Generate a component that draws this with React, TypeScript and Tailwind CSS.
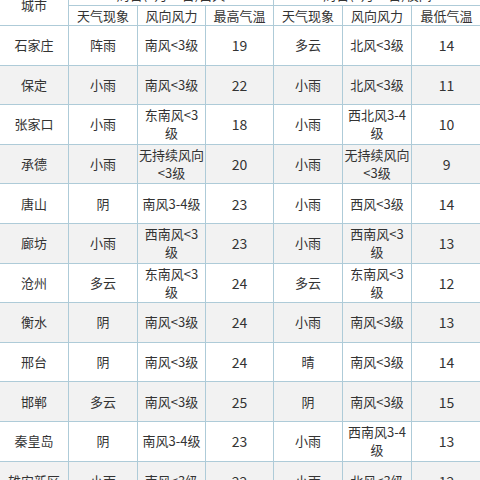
const rows: string[][] = [
  ["石家庄", "阵雨", "南风<3级", "19", "多云", "北风<3级", "14"],
  ["保定", "小雨", "南风<3级", "22", "小雨", "北风<3级", "11"],
  ["张家口", "小雨", "东南风<3\n级", "18", "小雨", "西北风3-4\n级", "10"],
  ["承德", "小雨", "无持续风向\n<3级", "20", "小雨", "无持续风向\n<3级", "9"],
  ["唐山", "阴", "南风3-4级", "23", "小雨", "西风<3级", "14"],
  ["廊坊", "小雨", "西南风<3\n级", "23", "小雨", "西南风<3\n级", "13"],
  ["沧州", "多云", "东南风<3\n级", "24", "多云", "东南风<3\n级", "12"],
  ["衡水", "阴", "南风<3级", "24", "小雨", "南风<3级", "13"],
  ["邢台", "阴", "南风<3级", "24", "晴", "南风<3级", "14"],
  ["邯郸", "多云", "南风<3级", "25", "阴", "南风<3级", "15"],
  ["秦皇岛", "阴", "南风3-4级", "23", "小雨", "西南风3-4\n级", "13"],
  ["雄安新区", "小雨", "南风<3级", "22", "小雨", "北风<3级", "12"],
];

const cell = "border border-[#aecbd8] px-0 text-center align-middle whitespace-pre-line";

export default function App() {
  return (
    <div
      className="h-[480px] w-[480px] overflow-hidden bg-white text-[13px] leading-[18px] text-[#333]"
      style={{ fontFamily: '"Noto Sans CJK SC", "Noto Sans", sans-serif' }}
    >
      <table className="-ml-px -mt-[16px] w-[482px] table-fixed border-collapse">
        <colgroup>
          <col className="w-[69px]" />
          <col className="w-[69px]" />
          <col className="w-[68px]" />
          <col className="w-[68px]" />
          <col className="w-[69px]" />
          <col className="w-[69px]" />
          <col className="w-[70px]" />
        </colgroup>
        <thead>
          <tr className="h-[21px]">
            <th rowSpan={2} className={`${cell} font-normal`}>
              城市
            </th>
            <th colSpan={3} className={`${cell} font-normal`}>
              周日(6月27日)白天
            </th>
            <th colSpan={3} className={`${cell} font-normal`}>
              周日(6月27日)夜间
            </th>
          </tr>
          <tr className="h-[20px]">
            <th className={`${cell} font-normal`}>天气现象</th>
            <th className={`${cell} font-normal`}>风向风力</th>
            <th className={`${cell} font-normal`}>最高气温</th>
            <th className={`${cell} font-normal`}>天气现象</th>
            <th className={`${cell} font-normal`}>风向风力</th>
            <th className={`${cell} font-normal`}>最低气温</th>
          </tr>
        </thead>
        <tbody>
          {rows.map((r, i) => (
            <tr key={r[0]} className={i % 2 === 1 ? "h-[39.6px] bg-[#f2f2f2]" : "h-[39.6px] bg-white"}>
              {r.map((v, j) => (
                <td key={j} className={`${cell} ${j === 3 || j === 6 ? "text-[14px]" : ""}`}>
                  {v}
                </td>
              ))}
            </tr>
          ))}
        </tbody>
      </table>
    </div>
  );
}
